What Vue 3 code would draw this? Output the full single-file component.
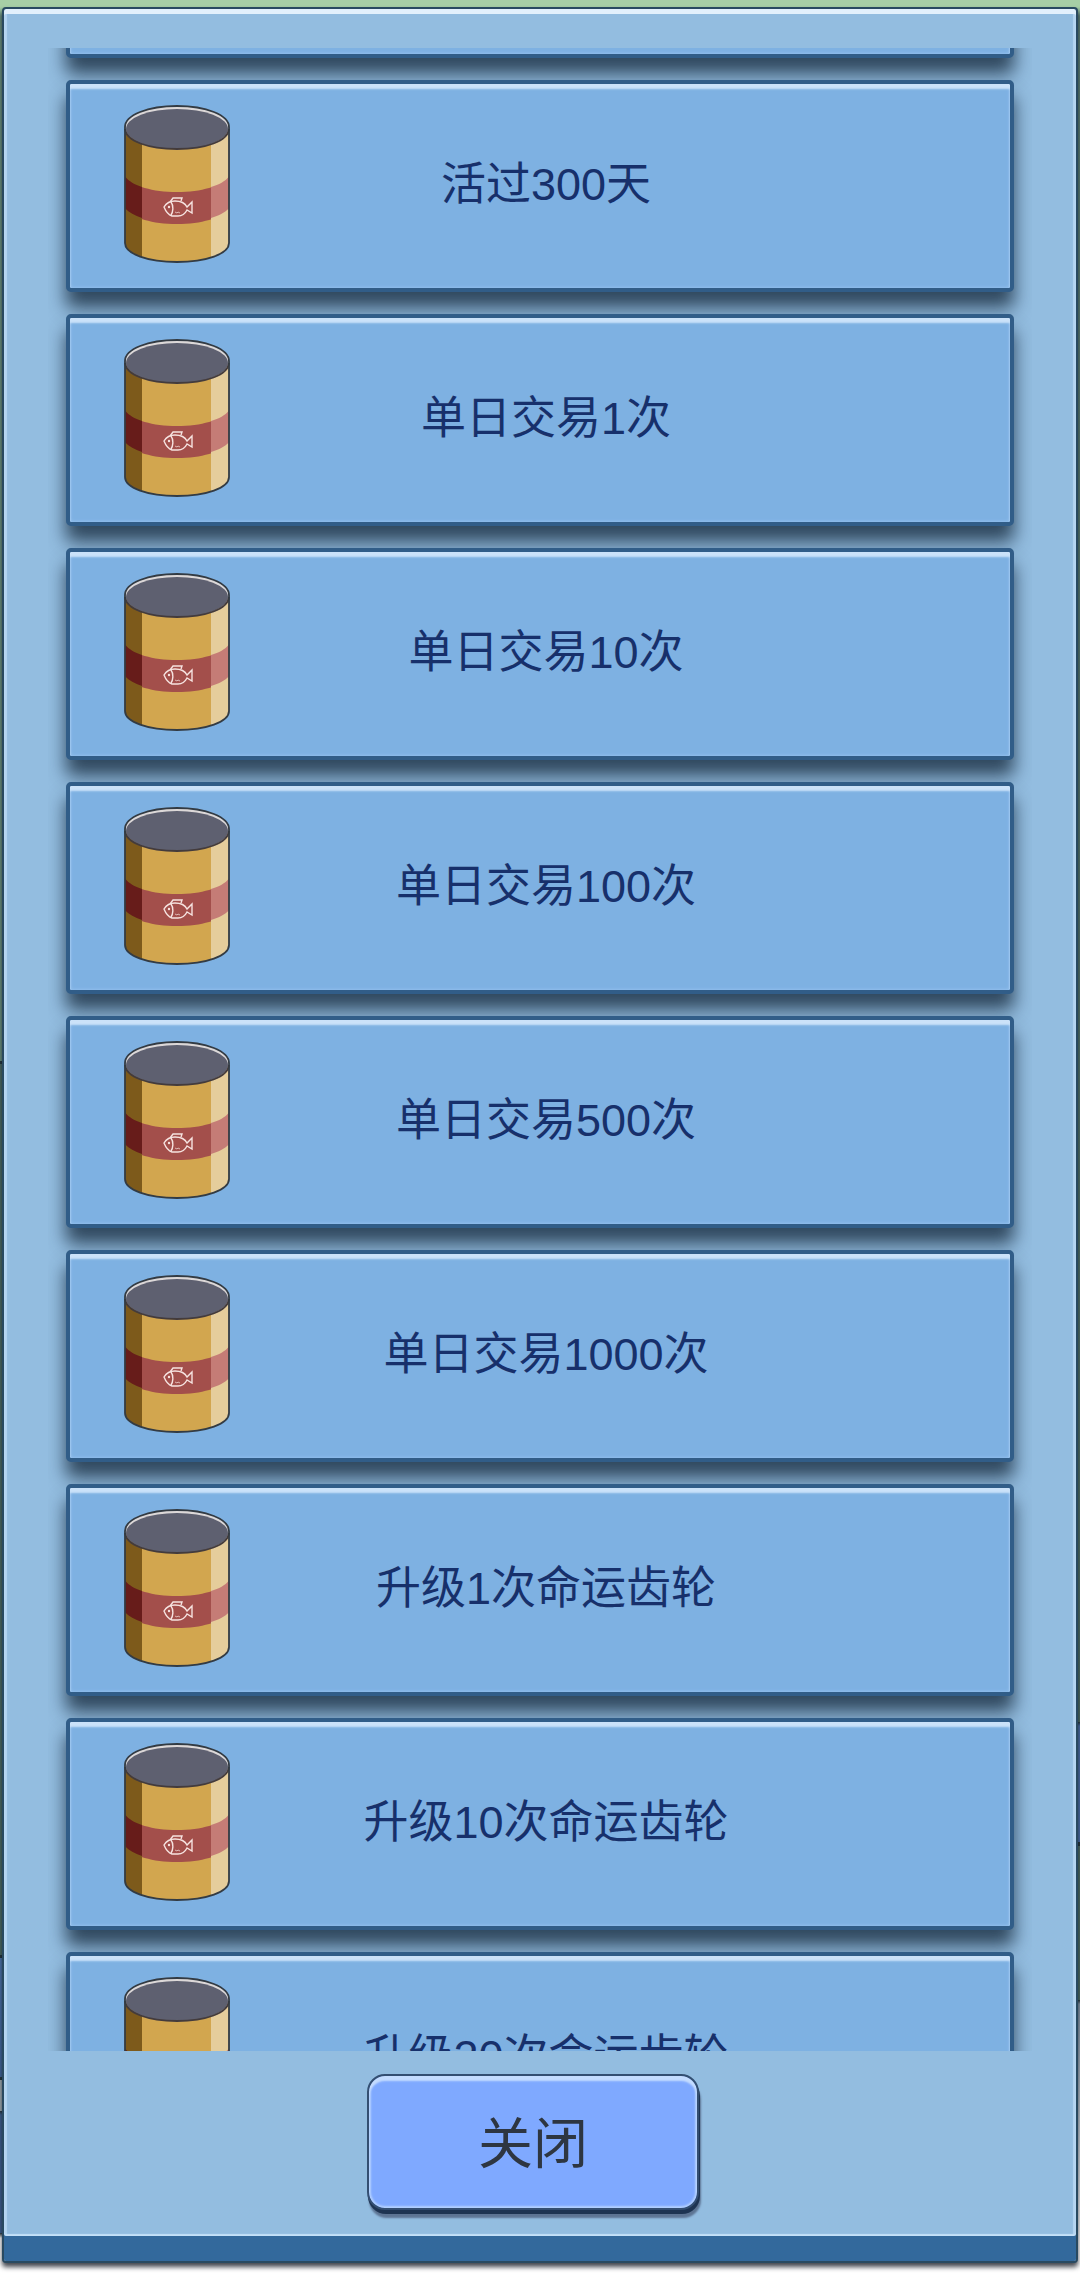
<script setup>
import { onMounted, ref } from 'vue';

const tasks = [
    '',
    '活过300天',
    '单日交易1次',
    '单日交易10次',
    '单日交易100次',
    '单日交易500次',
    '单日交易1000次',
    '升级1次命运齿轮',
    '升级10次命运齿轮',
    '升级20次命运齿轮',
];

const list = ref(null);
const open = ref(true);

onMounted(()=>{
    // 跳过已经看过的第一条
    list.value.scrollTop = 202;
})

const close = () =>{
    open.value = false;
}
</script>

<template>
    <div class="page">
        <div v-show="open" class="panel">
            <ul ref="list" class="list">
                <li v-for="task in tasks" :key="task" class="card">
                    <svg class="can" viewBox="0 0 106 158" aria-hidden="true">
                        <clipPath id="body">
                            <path d="M1 22V138C1 149 24 157 53 157S105 149 105 138V22C105 33 82 44 53 44S1 33 1 22Z" />
                        </clipPath>
                        <g clip-path="url(#body)">
                            <rect width="106" height="158" fill="#d2a64f" />
                            <path d="M0 70C8 81 27 87 53 87S98 81 106 70V102C98 113 79 119 53 119S8 113 0 102Z" fill="#a34f4b" />
                            <rect width="18" height="158" fill="#7d5a1b" />
                            <path d="M0 70C4 76 10 79 18 82V113C10 110 4 107 0 102Z" fill="#671c1a" />
                            <rect x="87" width="19" height="158" fill="#e5cd9b" />
                            <path d="M106 70C102 76 96 79 87 82V113C96 110 102 107 106 102Z" fill="#c57c76" />
                        </g>
                        <ellipse cx="53" cy="22" rx="52" ry="21" fill="#dcd8d8" />
                        <ellipse cx="53" cy="24" rx="51" ry="20" fill="#5e6070" />
                        <path d="M1 24C2 36 24 44 53 44S104 36 105 24" fill="none" stroke="#433b3c" stroke-width="1.8" />
                        <path d="M1 22C1 10 24 1 53 1S105 10 105 22V138C105 149 82 157 53 157S1 149 1 138Z" fill="none" stroke="#333b43" stroke-width="1.8" />
                        <g fill="none" stroke="#f6e3e0" stroke-width="1.4">
                            <path d="M40 102C43 97 47 96 51 96C57 96 61 98 63 102L68 97V108L63 105C61 109 58 111 54 111H48C45 110 42 107 40 102Z" />
                            <path d="M46 97L49 93H58L57 96M47 97C50 101 49 107 47 110" />
                            <path d="M51 107L53 108L54 107L56 108" stroke-width=".7" />
                        </g>
                        <circle cx="45" cy="102" r="1.2" fill="#f6e3e0" />
                    </svg>
                    <span class="label">{{ task }}</span>
                </li>
            </ul>
            <button type="button" class="close" @click="close">关闭</button>
        </div>
    </div>
</template>

<style>
body{
    margin: 0;
    background: #fff;
}
</style>

<style scoped>
.page{
    box-sizing: border-box;
    height: 100vh;
    padding: 7px 2px 17px;
    overflow: hidden;
    font-family: "Liberation Sans", "Noto Sans CJK SC", sans-serif;
    /* 面板两侧露出的游戏画面 */
    background:
        linear-gradient(#a7cfa6 7px, #6c9280 16px, #6c9280 1061px, #22343b 1061px, #22343b 1064px, #4c6c64 1064px, #4c6c64 1955px, #22343b 1955px, #22343b 1958px, #4f78b0 1958px, #41669c 2077px, #22343b 2077px, #22343b 2080px, #a3b0b5 2080px, #a3b0b5 2111px, #22343b 2111px, #3f6191 2115px, #3f6191 2233px, #22343b 2233px, #fff 2238px) left / 50% 100% no-repeat,
        linear-gradient(#a7cfa6 7px, #5c8077 16px, #4c6c64 1722px, #22343b 1722px, #4a6ea8 1726px, #4a6ea8 1842px, #22343b 1842px, #22343b 1846px, #4c6c64 1846px, #4c6c64 2000px, #22343b 2000px, #8496a8 2004px, #fff 2238px) right / 50% 100% no-repeat;
}

.panel{
    box-sizing: border-box;
    display: flex;
    flex-direction: column;
    align-items: center;
    height: 100%;
    padding: 39px 44px 51px;
    border: 2px solid #294a61;
    border-radius: 4px;
    background: #93bde0;
    box-shadow:
        inset 0 -25px #33699c,
        inset 0 -27px 1px #c4e0f8,
        inset 0 5px #e2f0fc,
        inset 3px 0 1px #b5d5f1,
        inset -3px 0 1px #b5d5f1,
        0 4px 5px rgba(20, 25, 35, .8);
}

.list{
    box-sizing: border-box;
    display: flex;
    flex: 1;
    flex-direction: column;
    gap: 22px;
    width: 100%;
    min-height: 0;
    margin: 0;
    padding: 0 18px;
    list-style: none;
    overflow-y: auto;
    scrollbar-width: none;
}

.card{
    box-sizing: border-box;
    display: flex;
    flex: none;
    align-items: center;
    height: 212px;
    padding: 0 148px 2px 54px;
    border: 4px solid #315d88;
    border-radius: 5px;
    background: #7eb1e2;
    box-shadow:
        inset 0 5px 2px #cbe2f9,
        inset 0 0 3px 1px #92bfed,
        0 16px 18px rgba(30, 52, 72, .85);
}

.can{
    flex: none;
    width: 106px;
    height: 158px;
    margin-bottom: 2px;
}

.label{
    flex: 1;
    color: #17306b;
    font-size: 45px;
    line-height: 60px;
    text-align: center;
    white-space: nowrap;
}

.close{
    width: 332px;
    height: 136px;
    margin: 23px 14px 0 0;
    padding: 0 0 6px;
    border: 2px solid #344f72;
    border-radius: 18px;
    color: #2e3641;
    font-family: inherit;
    font-size: 55px;
    background: #7fa9ff;
    box-shadow:
        inset 0 5px 2px #c4dcff,
        inset 0 0 2px 2px #b3d0ff,
        1px 4px #1e3452,
        2px 8px 2px #5d7493;
}
</style>
